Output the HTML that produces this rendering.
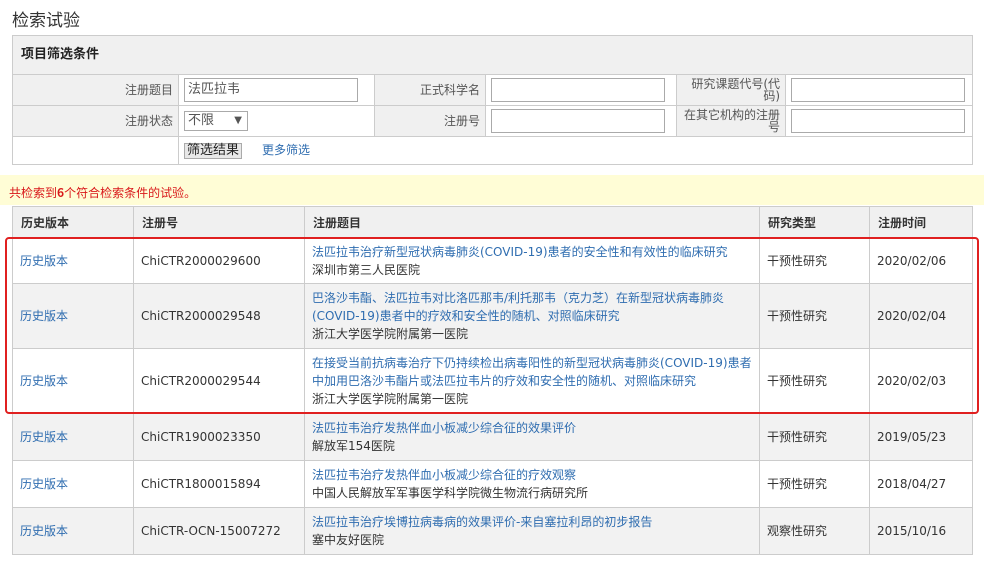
<!DOCTYPE html>
<html><head><meta charset="utf-8"><style>
*{box-sizing:border-box;margin:0;padding:0}
body{width:984px;height:570px;background:#fff;font-family:"DejaVu Sans","Noto Sans CJK SC",sans-serif;font-size:12px;color:#333;position:relative;overflow:hidden}
.ab{position:absolute}
h1{position:absolute;left:12px;top:6px;font-size:17px;font-weight:normal;font-family:"Noto Sans CJK SC",sans-serif;color:#333}
table{border-collapse:collapse;position:absolute;table-layout:fixed}
td,th{border:1px solid #ccc;font-weight:normal}
.f td{background:#f0f0f0;text-align:right;padding-right:5px;color:#555;line-height:12px}
.f td.i{background:#fff;text-align:left;padding:0 5px}
.inp{height:24px;border:1px solid #aaa;background:#fff;padding:0 3px;font-size:13px;width:174px;line-height:22px}
.r td{padding:0 7px;vertical-align:middle;line-height:18px}
.r th{background:#f0f0f0;text-align:left;padding:0 8px;font-weight:bold;height:31px;font-family:"Noto Sans CJK SC",sans-serif;font-size:12px}
.g td{background:#f2f2f2}
a{color:#2f6db0;text-decoration:none}
</style></head><body>
<h1>检索试验</h1>
<table class="f" style="left:12px;top:35px;width:960px">
<colgroup><col style="width:166px"><col style="width:196px"><col style="width:111px"><col style="width:191px"><col style="width:109px"><col style="width:187px"></colgroup>
<tr><td colspan="6" style="height:39px;text-align:left;padding-left:8px;font-weight:bold;color:#222;font-size:13px">项目筛选条件</td></tr>
<tr style="height:31px"><td>注册题目</td><td class="i"><div class="inp">法匹拉韦</div></td><td>正式科学名</td><td class="i"><div class="inp"></div></td><td>研究课题代号(代<br>码)</td><td class="i"><div class="inp"></div></td></tr>
<tr style="height:31px"><td>注册状态</td><td class="i"><div class="inp" style="width:64px;height:20px;line-height:18px;font-size:13px;position:relative">不限<span style="position:absolute;right:5px;top:0;font-size:10px">▼</span></div></td><td>注册号</td><td class="i"><div class="inp"></div></td><td>在其它机构的注册<br>号</td><td class="i"><div class="inp"></div></td></tr>
<tr style="height:28px"><td style="background:#fff"></td><td class="i" colspan="5"><span style="display:inline-block;border:1px solid #aaa;background:#e8e8e8;padding:1px 2px;font-size:13px;color:#222">筛选结果</span><a style="margin-left:20px">更多筛选</a></td></tr>
</table>
<div class="ab" style="left:0;top:175px;width:984px;height:30px;background:#fffdd6;color:#d9181a;padding:9px 0 0 9px;font-family:'Noto Sans CJK SC',sans-serif;font-size:12px">共检索到<b>6</b>个符合检索条件的试验。</div>
<table class="r" style="left:12px;top:206px;width:960px">
<colgroup><col style="width:121px"><col style="width:171px"><col style="width:455px"><col style="width:110px"><col style="width:103px"></colgroup>
<tr><th>历史版本</th><th>注册号</th><th>注册题目</th><th>研究类型</th><th>注册时间</th></tr>
<tr style="height:46px"><td><a>历史版本</a></td><td>ChiCTR2000029600</td><td><a>法匹拉韦治疗新型冠状病毒肺炎(COVID-19)患者的安全性和有效性的临床研究</a><br>深圳市第三人民医院</td><td>干预性研究</td><td>2020/02/06</td></tr>
<tr class="g" style="height:65px"><td><a>历史版本</a></td><td>ChiCTR2000029548</td><td><a>巴洛沙韦酯、法匹拉韦对比洛匹那韦/利托那韦（克力芝）在新型冠状病毒肺炎(COVID-19)患者中的疗效和安全性的随机、对照临床研究</a><br>浙江大学医学院附属第一医院</td><td>干预性研究</td><td>2020/02/04</td></tr>
<tr style="height:65px"><td><a>历史版本</a></td><td>ChiCTR2000029544</td><td><a>在接受当前抗病毒治疗下仍持续检出病毒阳性的新型冠状病毒肺炎(COVID-19)患者中加用巴洛沙韦酯片或法匹拉韦片的疗效和安全性的随机、对照临床研究</a><br>浙江大学医学院附属第一医院</td><td>干预性研究</td><td>2020/02/03</td></tr>
<tr class="g" style="height:47px"><td><a>历史版本</a></td><td>ChiCTR1900023350</td><td><a>法匹拉韦治疗发热伴血小板减少综合征的效果评价</a><br>解放军154医院</td><td>干预性研究</td><td>2019/05/23</td></tr>
<tr style="height:47px"><td><a>历史版本</a></td><td>ChiCTR1800015894</td><td><a>法匹拉韦治疗发热伴血小板减少综合征的疗效观察</a><br>中国人民解放军军事医学科学院微生物流行病研究所</td><td>干预性研究</td><td>2018/04/27</td></tr>
<tr class="g" style="height:47px"><td><a>历史版本</a></td><td>ChiCTR-OCN-15007272</td><td><a>法匹拉韦治疗埃博拉病毒病的效果评价-来自塞拉利昂的初步报告</a><br>塞中友好医院</td><td>观察性研究</td><td>2015/10/16</td></tr>
</table>
<div class="ab" style="left:5px;top:237px;width:974px;height:177px;border:2px solid #e02020;border-radius:4px"></div>
</body></html>
